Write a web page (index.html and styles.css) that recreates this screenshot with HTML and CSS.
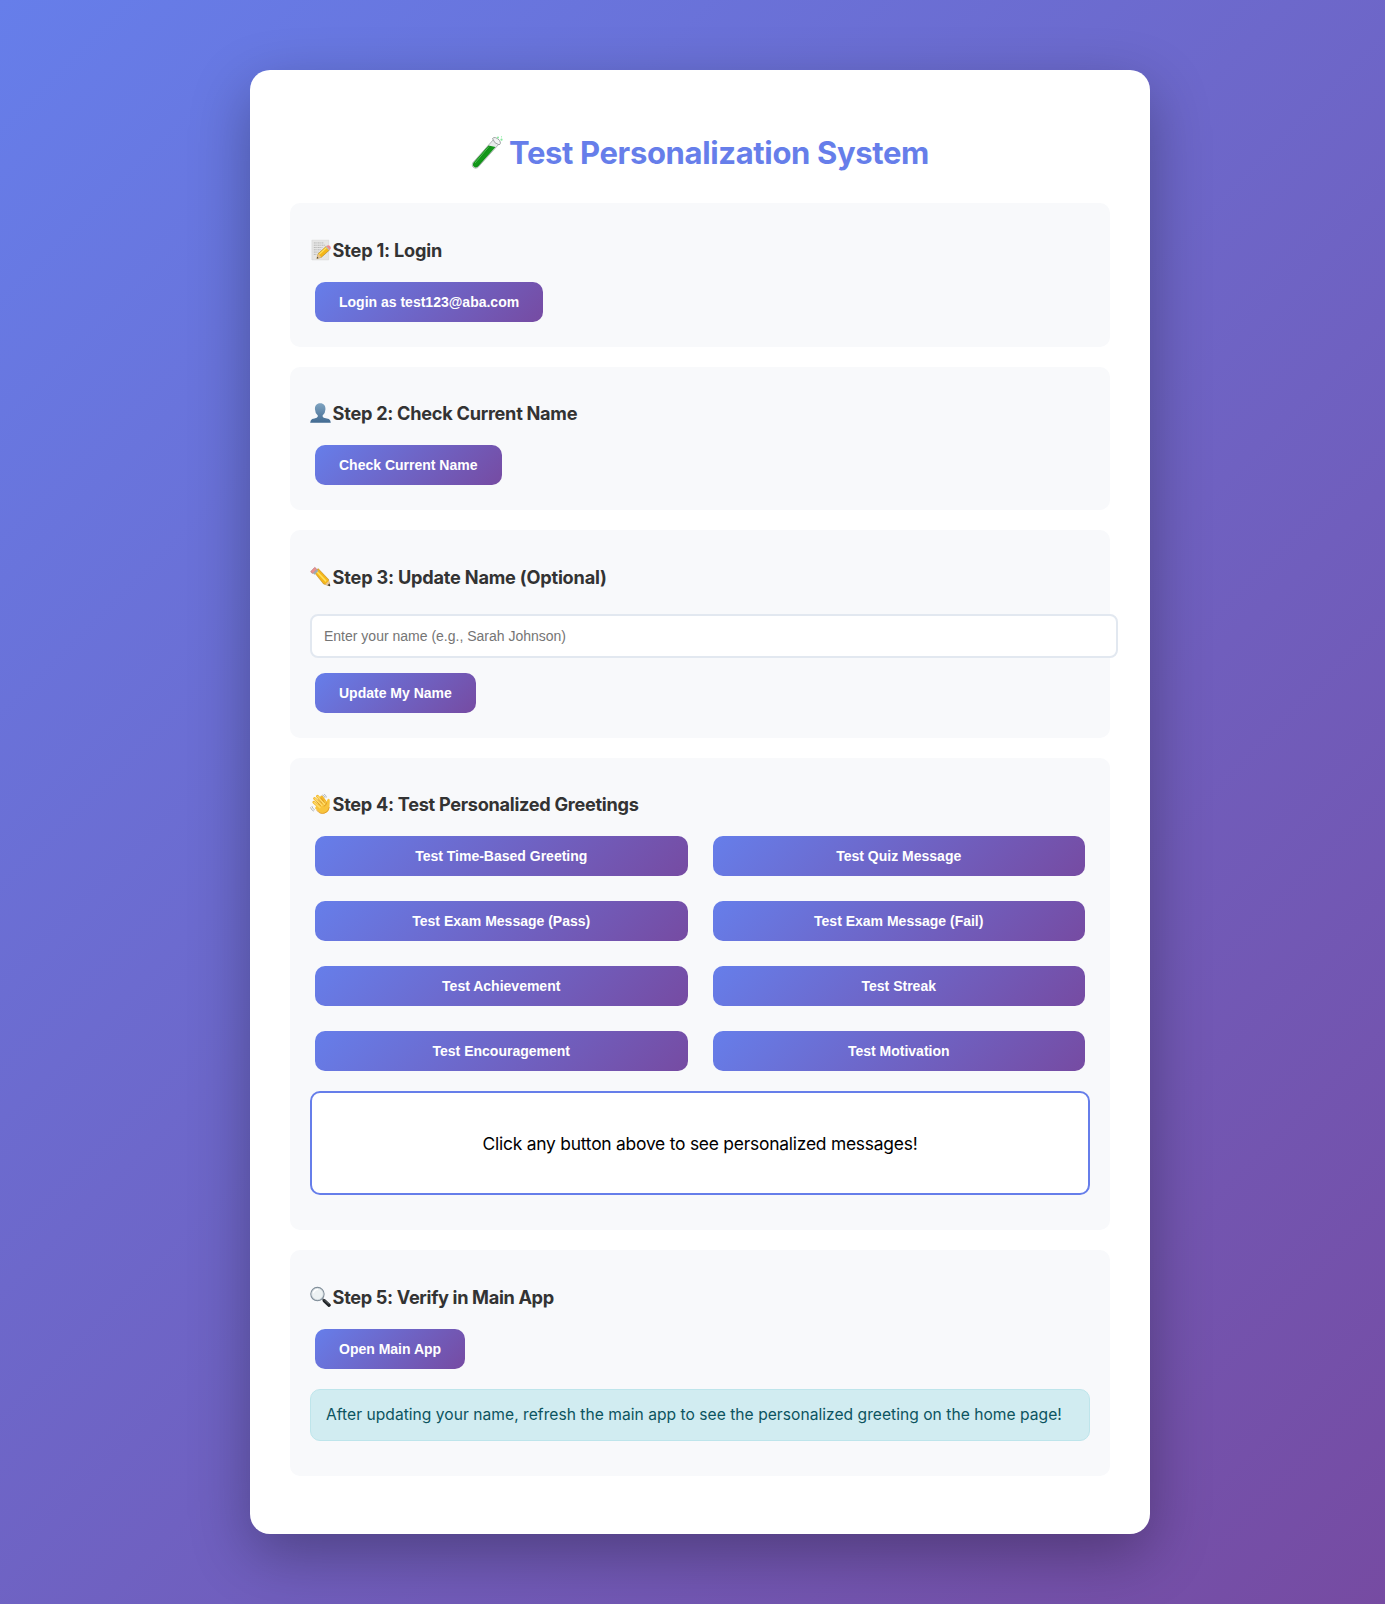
FILE: index.html
```html
<!DOCTYPE html>
<html lang="en">
<head>
<meta charset="UTF-8">
<title>Test Personalization System</title>
<link rel="stylesheet" href="styles.css">
</head>
<body>
<main class="container">
  <h1 class="title">
    <svg class="title-icon" viewBox="0 0 32 34" aria-hidden="true">
      <defs><linearGradient id="liquid" x1="0" y1="0" x2="1" y2="1"><stop offset=".25" stop-color="#07810d"/><stop offset=".5" stop-color="#149a1a"/><stop offset=".75" stop-color="#046c0b"/></linearGradient></defs>
      <path d="M22.5 3.5 2 26.5Q-.2 31 4.2 32.2 6.8 32.5 8.2 30L28 8Z" fill="#e7eaea" stroke="#969c9c" stroke-width=".7"/>
      <path d="M17.5 9.5 2.4 26.8Q.8 30.5 4.4 31.5 6.4 31.7 7.8 29.7L24.5 11Z" fill="url(#liquid)"/>
      <path d="m18 10.5-14 16.5" stroke="#5fc262" stroke-width=".8"/>
      <path d="M21.5 2.5Q24-.2 28.5 4.4 30.5 8 28 8.8 23 7.6 21.5 2.5Z" fill="#f3f4f4" stroke="#9da3a3" stroke-width="1"/>
      <g fill="#83e99b"><circle cx="27" cy="1.5" r="1"/><circle cx="30.5" cy="3.7" r="1.1"/><circle cx="30.5" cy="0.8" r=".6"/></g>
    </svg>
    <span class="title-text">Test Personalization System</span>
  </h1>

  <section class="section">
    <h3 class="step"><svg class="icon" viewBox="0 0 22 22" aria-hidden="true">
      <path d="M2 .7h17.6v20.6H2z" fill="#e6e6e5" stroke="#d0d1d1" stroke-width=".5"/>
      <path d="M4 3.6h10M4 6h12M4 8.4h9M4 10.8h8M4 13.2h5M4 15.6h3" stroke="#aaa" stroke-width=".8" stroke-dasharray="2 .6 1 .5"/>
      <path d="m7.2 19.9 1.3-5L17 7.2l3.5 3.7-8.6 7.8z" fill="#f4b619" stroke="#9b720e" stroke-width=".5"/>
      <path d="m9.6 15.6 7.8-7.2" stroke="#ffe25c" stroke-width="1.3"/>
      <path d="m17 7.2 1.2-1q1.6-.6 3 .9 1 1.7.3 2.8l-1 1z" fill="#ed8990"/><path d="m16.4 7.8.9-.8 3.5 3.7-.9.8z" fill="#b8bdc1"/>
      <path d="m7.2 19.9 1.3-5 3.4 3.8z" fill="#e7c594"/><path d="m7.2 19.9.5-1.8 1.2 1.3z" fill="#333"/>
    </svg><span class="s1">Step 1: Login</span></h3>
    <button class="btn">Login as test123@aba.com</button>
  </section>

  <section class="section">
    <h3 class="step"><svg class="icon" viewBox="0 0 22 22" aria-hidden="true">
      <defs><linearGradient id="person" x1="0" y1="0" x2="0" y2="1"><stop stop-color="#7fa4c1"/><stop offset="1" stop-color="#426a91"/></linearGradient></defs>
      <path d="M10.7.7C7 .7 5 3.2 5.2 7q.2 4.5 3 6.7.3 1.7-1.2 2.2-2.4.7-4.8 1.4Q.4 18.2.2 21.3h21.6q-.2-3.1-2-4L14.4 15.9q-1.5-.5-1.2-2.2 2.8-2.2 3-6.7C16.4 3.2 14.4.7 10.7.7Z" fill="url(#person)"/>
    </svg><span class="s2">Step 2: Check Current Name</span></h3>
    <button class="btn">Check Current Name</button>
  </section>

  <section class="section">
    <h3 class="step"><svg class="icon" viewBox="0 0 22 22" aria-hidden="true">
      <path d="m4.7 6.4 3.8-4.2 10.8 11.2 1.6 7-6.7-2.1z" fill="#f6b71b" stroke="#a97512" stroke-width=".5"/>
      <path d="m6.6 4.8 10.3 10.8" stroke="#ffe15a" stroke-width="1.6"/>
      <path d="m1 4.9 4-4 2.2 2-4 4.4Q1.1 7 .8 5Z" fill="#e99191" stroke="#a95f60" stroke-width=".5"/>
      <path d="m3.1 7.2 4-4.4 1.7 1.7-4 4.2z" fill="#9eacb5"/>
      <path d="m15.8 18.8 3.9-3.8 1.2 5.4z" fill="#e8c697"/><path d="m18.4 19.6 2-1.9.8 3z" fill="#333"/>
    </svg><span class="s3">Step 3: Update Name (Optional)</span></h3>
    <input class="name-input" type="text" placeholder="Enter your name (e.g., Sarah Johnson)">
    <button class="btn">Update My Name</button>
  </section>

  <section class="section">
    <h3 class="step"><svg class="icon" viewBox="0 0 22 22" aria-hidden="true">
      <g fill="none" stroke="#f2b72b" stroke-width="3" stroke-linecap="round"><path d="m4 9.2 7 6.3M4.8 5.3l8 7.5M7.8 2.9l7.5 8.2M12.2 3.6l4.5 6.2"/></g>
      <path d="m7 12 8.5-5 2 2.4q.2-3.8 2.2-3.9 1.5.5 1 3.4l-.4 5.8q-.6 4.8-4.6 6-4 1-6.5-1.3l-4-4Z" fill="#f8c43c"/>
      <g fill="none" stroke="#ffdb69" stroke-width="1.5" stroke-linecap="round"><path d="m4.4 9.5 6 5.3M5.2 5.5l7.3 7M8.1 3.2l7.2 8"/></g>
      <path d="m6.8 8.8 4.4 4M8.3 6.2l4.7 4.4M11.2 4.8l4.2 4.8M17.5 9.4q-.3 3-3 4" fill="none" stroke="#d18c19" stroke-width=".7"/>
      <path d="M7 17.5q4 5 8.7 2.8 4-1.6 4.5-6" fill="none" stroke="#dd9323" stroke-width=".8"/>
      <g fill="none" stroke="#a9adb1" stroke-width=".9"><path d="M12.8 1.5q2.2.5 3 3M14.6.7q2 .7 2.7 3.4M2 13.2q.4 2.7 3 4M.5 14.5q.8 3 3.6 4"/></g>
    </svg><span class="s4">Step 4: Test Personalized Greetings</span></h3>
    <div class="button-grid">
      <button class="btn">Test Time-Based Greeting</button>
      <button class="btn">Test Quiz Message</button>
      <button class="btn">Test Exam Message (Pass)</button>
      <button class="btn">Test Exam Message (Fail)</button>
      <button class="btn">Test Achievement</button>
      <button class="btn">Test Streak</button>
      <button class="btn">Test Encouragement</button>
      <button class="btn">Test Motivation</button>
    </div>
    <div class="greeting"><span>Click any button above to see personalized messages!</span></div>
  </section>

  <section class="section">
    <h3 class="step"><svg class="icon" viewBox="0 0 22 22" aria-hidden="true">
      <path d="m13.2 13 1.9 1.9" stroke="#73777a" stroke-width="2"/><path d="m15 14.9 5 4.7" stroke="#202427" stroke-width="3.5" stroke-linecap="round"/><path d="m15.2 14.3 4.5 4" stroke="#75797b" stroke-width=".8"/>
      <circle cx="7.8" cy="7.9" r="6.9" fill="#edf2f3" stroke="#7f8d98" stroke-width="1.3"/><circle cx="7.8" cy="7.9" r="6" fill="none" stroke="#cfd6db" stroke-width=".7"/><path d="M3.5 7Q4.5 3.1 8.5 3" fill="none" stroke="#fff" stroke-width="1.3"/>
    </svg><span class="s5">Step 5: Verify in Main App</span></h3>
    <button class="btn">Open Main App</button>
    <div class="info"><span>After updating your name, refresh the main app to see the personalized greeting on the home page!</span></div>
  </section>
</main>
</body>
</html>
```
FILE: styles.css
```css
body {
  margin: 0;
  min-height: 1604px;
  box-sizing: border-box;
  padding-top: 70px;
  padding-left: 15px;
  background: linear-gradient(135deg, #667eea 0%, #764ba2 100%);
  font-family: Inter, "Liberation Sans", sans-serif;
}
.container {
  box-sizing: border-box;
  width: 900px;
  height: 1464.4px;
  margin: 0 auto;
  padding: 40px;
  background: #fff;
  border-radius: 20px;
  box-shadow: 0 20px 60px rgba(0, 0, 0, .3);
  display: flow-root;
}
.title {
  display: flex;
  align-items: center;
  justify-content: center;
  gap: 6px;
  height: 38px;
  margin: 24px 0 31.4px;
  font-size: 31px;
  font-weight: 700;
  line-height: 38px;
  color: #667eea;
  white-space: nowrap;
}
.title-icon { width: 32px; height: 34px; }
.title-text { letter-spacing: -.35px; }
.section {
  margin-bottom: 20px;
  padding: 20px;
  background: #f8f9fb;
  border-radius: 10px;
}
.step {
  display: flex;
  align-items: center;
  gap: 1.6px;
  height: 22px;
  margin: 15.4px 0 16px;
  font-size: 18.15px;
  font-weight: 700;
  line-height: 22px;
  color: #333;
  white-space: nowrap;
}
.icon { width: 21px; height: 22px; }
.s1 { letter-spacing: -.2px; }
.s2 { letter-spacing: -.27px; }
.s3 { letter-spacing: -.2px; }
.s4 { letter-spacing: -.29px; }
.s5 { letter-spacing: -.33px; }
.btn {
  display: inline-block;
  vertical-align: top;
  height: 40px;
  margin: 5px;
  padding: 0 24px;
  border: 0;
  border-radius: 10px;
  background: linear-gradient(135deg, #667eea 0%, #764ba2 100%);
  color: #fff;
  font: 700 14px "Liberation Sans", Arial, sans-serif;
  white-space: nowrap;
}
.name-input {
  display: block;
  box-sizing: content-box;
  width: 100%;
  height: 16px;
  margin: 26.3px 0 10px;
  padding: 12px;
  border: 2px solid #e2e8f0;
  border-radius: 8px;
  background: #fff;
  font: 14px "Liberation Sans", Arial, sans-serif;
}
.name-input::placeholder { color: #757575; }
.button-grid {
  display: grid;
  grid-template-columns: 1fr 1fr;
  gap: 15px;
}
.greeting {
  display: flex;
  align-items: center;
  justify-content: center;
  box-sizing: border-box;
  height: 104px;
  margin: 15px 0;
  border: 2px solid #667eea;
  border-radius: 10px;
  background: #fff;
  color: #000;
  font-size: 17.4px;
  letter-spacing: -.22px;
}
.info {
  display: flex;
  align-items: center;
  box-sizing: border-box;
  height: 52px;
  margin: 15px 0;
  padding: 0 15px;
  border: 1px solid #bee5eb;
  border-radius: 10px;
  background: #d1ecf1;
  color: #0c5460;
  font-size: 15.6px;
  letter-spacing: .03px;
  white-space: nowrap;
}
```
